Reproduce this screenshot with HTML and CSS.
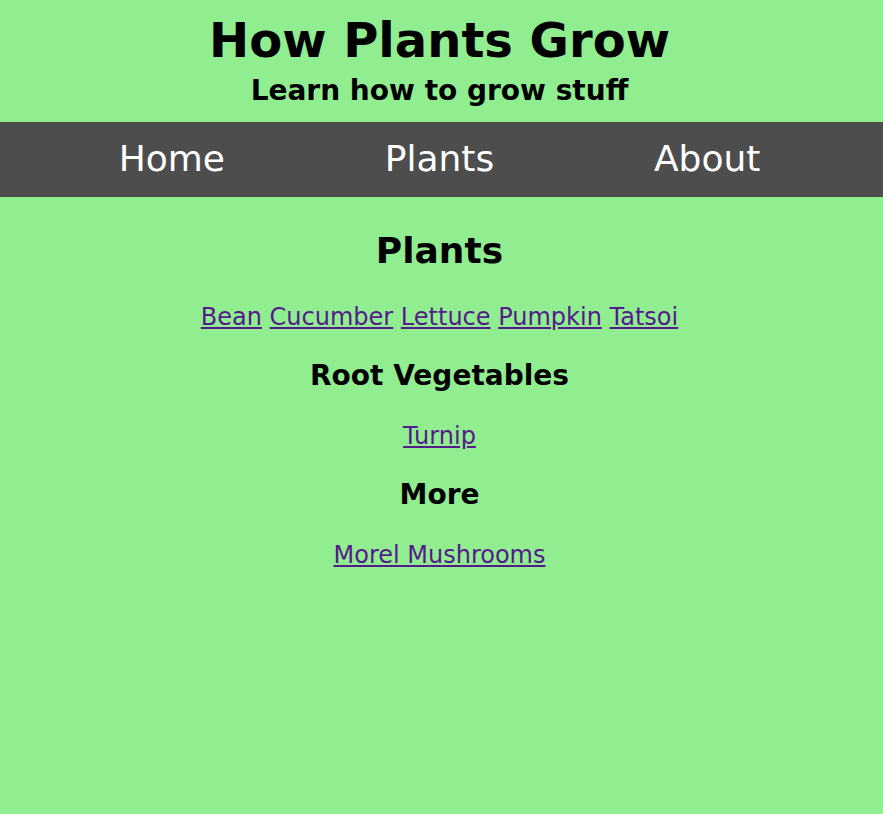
FILE: index.html
```html
<!DOCTYPE html>
<html lang="en">
<head>
<meta charset="utf-8">
<title>How Plants Grow</title>
<link rel="stylesheet" href="styles.css">
</head>
<body>
<header class="site-header">
  <h1 class="site-title">How Plants Grow</h1>
  <h2 class="site-subtitle">Learn how to grow stuff</h2>
</header>
<nav class="site-nav">
  <ul class="nav-list">
    <li><a class="nav-link" href="#">Home</a></li>
    <li><a class="nav-link" href="#">Plants</a></li>
    <li><a class="nav-link" href="#">About</a></li>
  </ul>
</nav>
<main class="content">
  <h2 class="page-title">Plants</h2>
  <p class="link-row"><a class="plant-link" href="#">Bean</a> <a class="plant-link" href="#">Cucumber</a> <a class="plant-link" href="#">Lettuce</a> <a class="plant-link" href="#">Pumpkin</a> <a class="plant-link" href="#">Tatsoi</a></p>
  <h3 class="section-title">Root Vegetables</h3>
  <p class="link-row"><a class="plant-link" href="#">Turnip</a></p>
  <h3 class="section-title">More</h3>
  <p class="link-row"><a class="plant-link" href="#">Morel Mushrooms</a></p>
</main>
</body>
</html>
```
FILE: styles.css
```css
html, body {
  margin: 0;
  padding: 0;
}

body {
  background: #90ee90;
  font-family: "DejaVu Sans", Verdana, sans-serif;
  font-size: 24px;
  color: #000;
  min-height: 814px;
}

.site-header {
  text-align: center;
  padding: 12px 4px 15px 0;
}

.site-title {
  margin: 0;
  font-size: 48px;
  font-weight: bold;
}

.site-subtitle {
  margin: 6px 0 0;
  font-size: 28px;
  font-weight: bold;
}

.site-nav {
  background: #4d4d4d;
  padding: 0 42px 0 38px;
}

.nav-list {
  list-style: none;
  margin: 0;
  padding: 0;
  display: grid;
  grid-template-columns: repeat(3, 1fr);
}

.nav-list li {
  text-align: center;
  padding: 16px 0 18px;
}

.nav-link {
  color: #fff;
  text-decoration: none;
  font-size: 36px;
}

.content {
  text-align: center;
  padding: 33px 4px 0 0;
}

.page-title {
  margin: 0 0 32px;
  font-size: 36px;
  font-weight: bold;
}

.link-row {
  margin: 0;
}

.section-title {
  margin: 28px 0 30px;
  font-size: 28px;
  font-weight: bold;
}

.plant-link {
  color: #551a8b;
  text-decoration: underline;
}
```
